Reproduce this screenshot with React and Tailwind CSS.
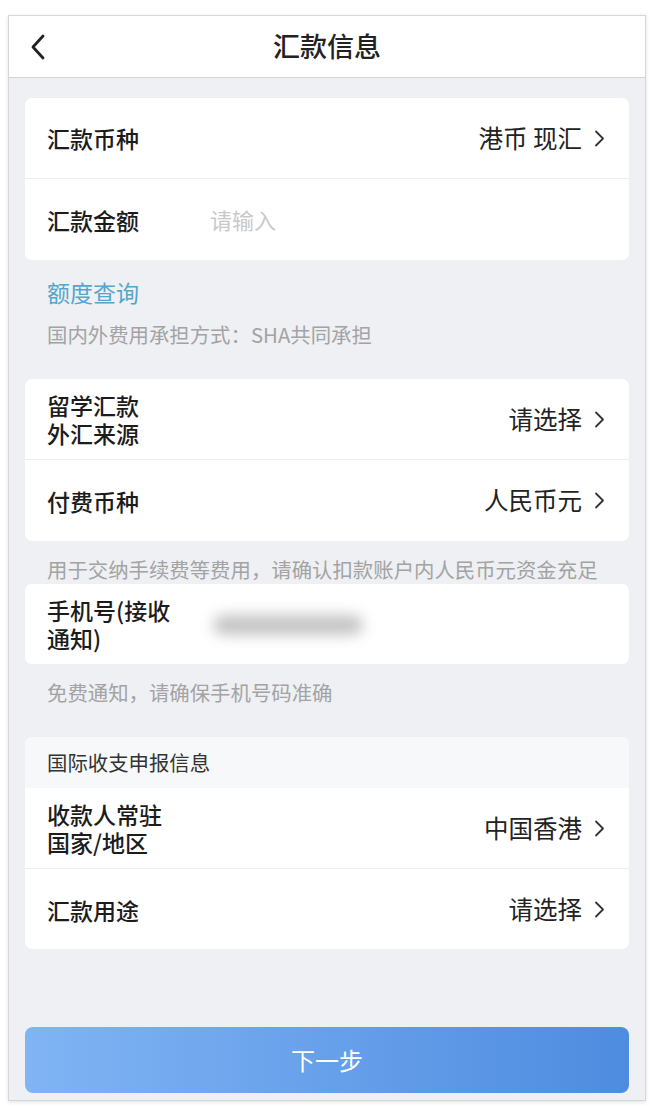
import React from "react";

const Chevron = () => (
  <svg width="11" height="17" viewBox="0 0 11 17" className="ml-[12px] shrink-0">
    <polyline
      points="2,1.5 9,8.5 2,15.5"
      fill="none"
      stroke="#333"
      strokeWidth="1.8"
      strokeLinecap="round"
      strokeLinejoin="round"
    />
  </svg>
);

const Label = ({ lines, className }) => (
  <div className={"text-[23px] leading-[28px] font-medium text-[#1c1c1c] " + (className || "")}>
    {lines.map((l) => (
      <div key={l}>{l}</div>
    ))}
  </div>
);

const SelectRow = ({ lines, value, border }) => (
  <div
    className={
      "flex items-center h-[81px] pl-[22px] pr-[24px] " +
      (border ? "border-b border-[#ededed]" : "")
    }
  >
    <Label lines={lines} className="flex-1" />
    <div className="flex items-center text-[24.5px] text-[#222]">
      {value}
      <Chevron />
    </div>
  </div>
);

const Note = ({ children, className }) => (
  <div className={"pl-[22px] text-[20.4px] leading-[28px] text-[#a3a3a3] " + (className || "")}>
    {children}
  </div>
);

export default function App() {
  return (
    <div
      className="w-[660px] h-[1111px] bg-white pt-[15px] pl-[8px]"
      style={{ fontFamily: '"Noto Sans CJK SC", "Noto Sans", sans-serif' }}
    >
      <div className="w-[638px] h-[1086px] border border-[#d6d6d6] shadow-[0_1px_4px_rgba(0,0,0,0.12)] bg-[#eef0f4] flex flex-col">
        {/* header */}
        <div className="h-[62px] bg-white border-b border-[#d4d4d4] flex items-center relative shrink-0">
          <svg width="16" height="26" viewBox="0 0 16 26" className="ml-[21px]">
            <polyline
              points="13,2 3,13 13,24"
              fill="none"
              stroke="#222"
              strokeWidth="2.8"
              strokeLinecap="round"
              strokeLinejoin="round"
            />
          </svg>
          <div className="absolute inset-0 flex items-center justify-center text-[27px] font-medium text-[#222] pointer-events-none">
            汇款信息
          </div>
        </div>

        <div className="px-[16px] flex-1 flex flex-col">
          {/* card 1 */}
          <div className="mt-[20px] bg-white rounded-[7px]">
            <SelectRow lines={["汇款币种"]} value="港币 现汇" border />
            <div className="flex items-center h-[81px] pl-[22px] pr-[24px]">
              <Label lines={["汇款金额"]} className="w-[163px]" />
              <div className="text-[22px] text-[#c9c9c9]">请输入</div>
            </div>
          </div>

          <div className="pt-[17px] pl-[22px] text-[23px] leading-[30px] text-[#54a6cb]">
            额度查询
          </div>
          <Note className="mt-[13px]">国内外费用承担方式：SHA共同承担</Note>

          {/* card 2 */}
          <div className="mt-[31px] bg-white rounded-[7px]">
            <SelectRow lines={["留学汇款", "外汇来源"]} value="请选择" border />
            <SelectRow lines={["付费币种"]} value="人民币元" />
          </div>

          <Note className="pt-[14px]">用于交纳手续费等费用，请确认扣款账户内人民币元资金充足</Note>

          {/* card 3 */}
          <div className="mt-[1px] bg-white rounded-[7px] flex items-center h-[80px] pl-[22px] pr-[24px]">
            <Label lines={["手机号(接收", "通知)"]} className="w-[166px]" />
            <div className="w-[150px] h-[20px] rounded-full bg-[#c4c4c4] blur-[7px] mt-[2px]" />
          </div>

          <Note className="pt-[14px]">免费通知，请确保手机号码准确</Note>

          {/* card 4 */}
          <div className="mt-[31px] bg-white rounded-[7px] overflow-hidden">
            <div className="h-[51px] bg-[#f7f8fa] flex items-center pl-[22px] text-[20.4px] text-[#333]">
              国际收支申报信息
            </div>
            <SelectRow lines={["收款人常驻", "国家/地区"]} value="中国香港" border />
            <div className="h-[80px]">
              <SelectRow lines={["汇款用途"]} value="请选择" />
            </div>
          </div>

          <div className="mt-auto mb-[7px]">
            <button className="w-full h-[66px] rounded-[8px] bg-gradient-to-r from-[#80b4f4] to-[#4e8ce0] text-white text-[24px] flex items-center justify-center">
              下一步
            </button>
          </div>
        </div>
      </div>
    </div>
  );
}
